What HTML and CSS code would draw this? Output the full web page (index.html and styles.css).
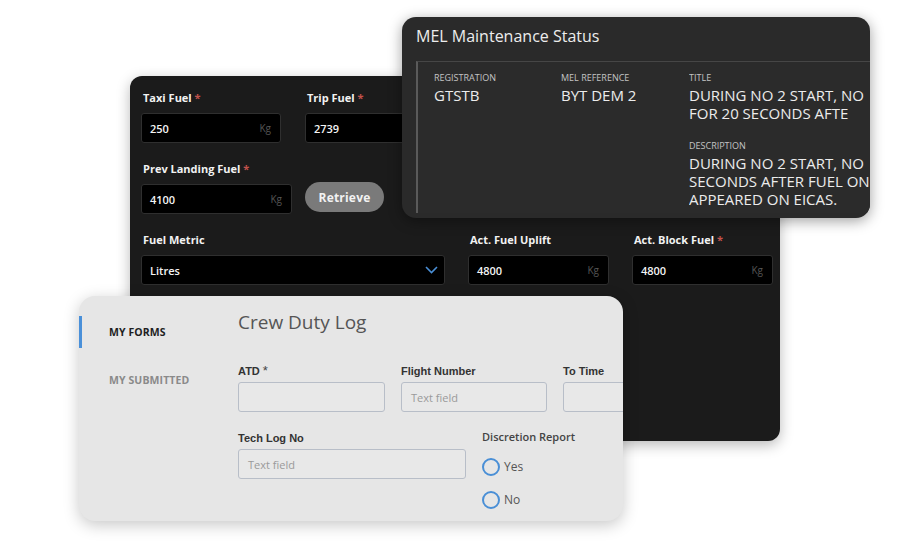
FILE: index.html
```html
<!DOCTYPE html>
<html lang="en">
<head>
<meta charset="utf-8">
<title>Fuel, MEL and Crew Duty Log</title>
<link rel="stylesheet" href="styles.css">
</head>
<body>
<div class="canvas">
  <section class="fuel">
    <div class="row r1">
      <div class="field w140">
        <div class="lbl">Taxi Fuel <span class="req">*</span></div>
        <div class="inp"><span class="val">250</span><span class="unit">Kg</span></div>
      </div>
      <div class="field w140">
        <div class="lbl">Trip Fuel <span class="req">*</span></div>
        <div class="inp"><span class="val">2739</span></div>
      </div>
    </div>
    <div class="row r2">
      <div class="field w151">
        <div class="lbl">Prev Landing Fuel <span class="req">*</span></div>
        <div class="inp"><span class="val">4100</span><span class="unit">Kg</span></div>
      </div>
      <button class="retrieve">Retrieve</button>
    </div>
    <div class="row r3">
      <div class="field w304">
        <div class="lbl">Fuel Metric</div>
        <div class="inp sel"><span class="val">Litres</span>
          <svg class="chev" width="13" height="8" viewBox="0 0 13 8"><polyline points="1,1 6.5,6.5 12,1" fill="none" stroke="#4a8fd6" stroke-width="1.6"/></svg>
        </div>
      </div>
      <div class="field w141">
        <div class="lbl">Act. Fuel Uplift</div>
        <div class="inp"><span class="val">4800</span><span class="unit">Kg</span></div>
      </div>
      <div class="field w141">
        <div class="lbl">Act. Block Fuel <span class="req">*</span></div>
        <div class="inp"><span class="val">4800</span><span class="unit">Kg</span></div>
      </div>
    </div>
  </section>

  <section class="mel">
    <h2 class="mel-title">MEL Maintenance Status</h2>
    <div class="mel-box">
      <div class="mel-col">
        <div class="mel-lbl">REGISTRATION</div>
        <div class="mel-val">GTSTB</div>
      </div>
      <div class="mel-col">
        <div class="mel-lbl">MEL REFERENCE</div>
        <div class="mel-val">BYT DEM 2</div>
      </div>
      <div class="mel-col">
        <div class="mel-lbl">TITLE</div>
        <div class="mel-val">DURING NO 2 START, NO<br>FOR 20 SECONDS AFTE</div>
        <div class="mel-lbl desc">DESCRIPTION</div>
        <div class="mel-val">DURING NO 2 START, NO<br>SECONDS AFTER FUEL ON<br>APPEARED ON EICAS.</div>
      </div>
    </div>
  </section>

  <section class="crew">
    <nav class="nav">
      <div class="nav-item active">MY FORMS</div>
      <div class="nav-item">MY SUBMITTED</div>
    </nav>
    <div class="content">
      <h1 class="crew-title">Crew Duty Log</h1>
      <div class="crow c1">
        <div class="cfield w147">
          <div class="clbl">ATD <span class="star">*</span></div>
          <div class="cinp"></div>
        </div>
        <div class="cfield w146">
          <div class="clbl">Flight Number</div>
          <div class="cinp"><span class="ph">Text field</span></div>
        </div>
        <div class="cfield w146">
          <div class="clbl">To Time</div>
          <div class="cinp"></div>
        </div>
      </div>
      <div class="crow c2">
        <div class="cfield w228">
          <div class="clbl">Tech Log No</div>
          <div class="cinp"><span class="ph">Text field</span></div>
        </div>
        <div class="disc">
          <div class="dlbl">Discretion Report</div>
          <div class="radio"><span class="circle"></span><span>Yes</span></div>
          <div class="radio"><span class="circle"></span><span>No</span></div>
        </div>
      </div>
    </div>
  </section>
</div>
</body>
</html>
```

FILE: styles.css
```css
* { box-sizing: border-box; }
html, body { margin: 0; padding: 0; background: #fff; }
body { font-family: "Open Sans", "Liberation Sans", sans-serif; }

.canvas { position: relative; width: 900px; height: 542px; overflow: hidden; background: #fff; }

/* ---------- Fuel panel ---------- */
.fuel {
  position: absolute; left: 130px; top: 76px; width: 650px; height: 365px;
  background: #1b1b1b; border-radius: 12px;
  box-shadow: 0 4px 14px rgba(0,0,0,.28);
  padding: 15px 0 0 11px;
}
.row { display: flex; align-items: flex-end; }
.r1 { gap: 24px; }
.r2 { gap: 13px; margin-top: 19px; }
.r3 { gap: 23px; margin-top: 19px; }
.field { display: flex; flex-direction: column; }
.w140 { width: 140px; }
.w141 { width: 141px; }
.w151 { width: 151px; }
.w304 { width: 304px; }
.lbl {
  font-size: 11px; line-height: 14px; font-weight: 700; color: #f2f2f2;
  margin: 0 0 8px 2px; white-space: nowrap;
}
.req { color: #c2524c; }
.inp {
  height: 30px; background: #000; border: 1px solid #2f2f2f; border-radius: 3px;
  display: flex; align-items: center; justify-content: space-between;
  padding: 0 9px 0 8px;
}
.inp.sel { padding-right: 6px; }
.val { font-size: 11px; font-weight: 600; color: #f4f4f4; }
.unit { font-size: 10px; color: #555; }
.chev { display: block; }
.retrieve {
  width: 79px; height: 30px; margin-bottom: 2px; border: 0; border-radius: 15px;
  background: #7a7a7a; color: #f2f2f2; font-family: "Open Sans", sans-serif;
  font-size: 12px; font-weight: 700; padding: 0; letter-spacing: .2px;
}

/* ---------- MEL panel ---------- */
.mel {
  position: absolute; left: 402px; top: 17px; width: 468px; height: 201px;
  background: #2a2a2a; border-radius: 14px; overflow: hidden;
  box-shadow: 0 3px 14px rgba(0,0,0,.38);
  padding: 9px 0 0 14px;
}
.mel-title {
  margin: 0; font-size: 16px; line-height: 20px; font-weight: 400; color: #ededed;
}
.mel-box {
  margin-top: 15px; height: 152px; width: 454px;
  border-left: 2px solid #5a5a5a; border-top: 1px solid #464646;
  background: #2b2b2b; overflow: hidden;
  display: grid; grid-template-columns: 127px 128px 1fr;
  padding: 10px 0 0 16px;
}
.mel-col { min-width: 0; overflow: hidden; }
.mel-lbl { font-size: 9px; line-height: 12px; color: #c4c4c4; }
.mel-lbl.desc { margin-top: 18px; }
.mel-val {
  margin-top: 2px; font-size: 15px; line-height: 18px; color: #ececec; white-space: nowrap;
}

/* ---------- Crew Duty Log ---------- */
.crew {
  position: absolute; left: 79px; top: 296px; width: 544px; height: 225px;
  background: #e6e6e6; border-radius: 16px; overflow: hidden;
  box-shadow: 0 4px 16px rgba(0,0,0,.22);
  display: flex;
}
.nav { width: 159px; flex: none; padding-top: 20px; }
.nav-item {
  height: 32px; display: flex; align-items: center; padding-left: 30px;
  font-size: 10.5px; font-weight: 700; color: #8a8a8a; letter-spacing: .1px;
}
.nav-item + .nav-item { margin-top: 16px; }
.nav-item.active { color: #1f1f1f; border-left: 3px solid #4a90d9; padding-left: 27px; }

.content { flex: 1; padding-top: 14px; min-width: 0; }
.crew-title { margin: 0; font-size: 19px; line-height: 24px; font-weight: 400; color: #555; }
.crow { display: flex; gap: 16px; }
.c1 { margin-top: 30px; }
.c2 { margin-top: 19px; align-items: flex-start; }
.cfield { flex: none; display: flex; flex-direction: column; }
.w147 { width: 147px; }
.w146 { width: 146px; }
.w228 { width: 228px; }
.clbl {
  font-family: "Liberation Sans", Arial, sans-serif; font-weight: 700;
  font-size: 11px; line-height: 14px; color: #333; margin-bottom: 4px; white-space: nowrap;
}
.star { font-weight: 400; font-size: 13px; color: #444; }
.cinp {
  height: 30px; border: 1px solid #b8bec8; border-radius: 3px; background: #e8e8e8;
  display: flex; align-items: center; padding-left: 9px;
}
.ph { font-size: 11px; color: #9a9a9a; }

.disc { display: flex; flex-direction: column; }
.dlbl { font-size: 11px; line-height: 14px; font-weight: 600; color: #444; white-space: nowrap; margin-top: -1px; }
.radio { display: flex; align-items: center; gap: 4px; height: 17px; font-size: 12px; color: #555; margin-top: 16px; }
.dlbl + .radio { margin-top: 14px; }
.circle {
  width: 18px; height: 18px; border-radius: 50%; border: 2px solid #4a8fd6; flex: none;
}
```
